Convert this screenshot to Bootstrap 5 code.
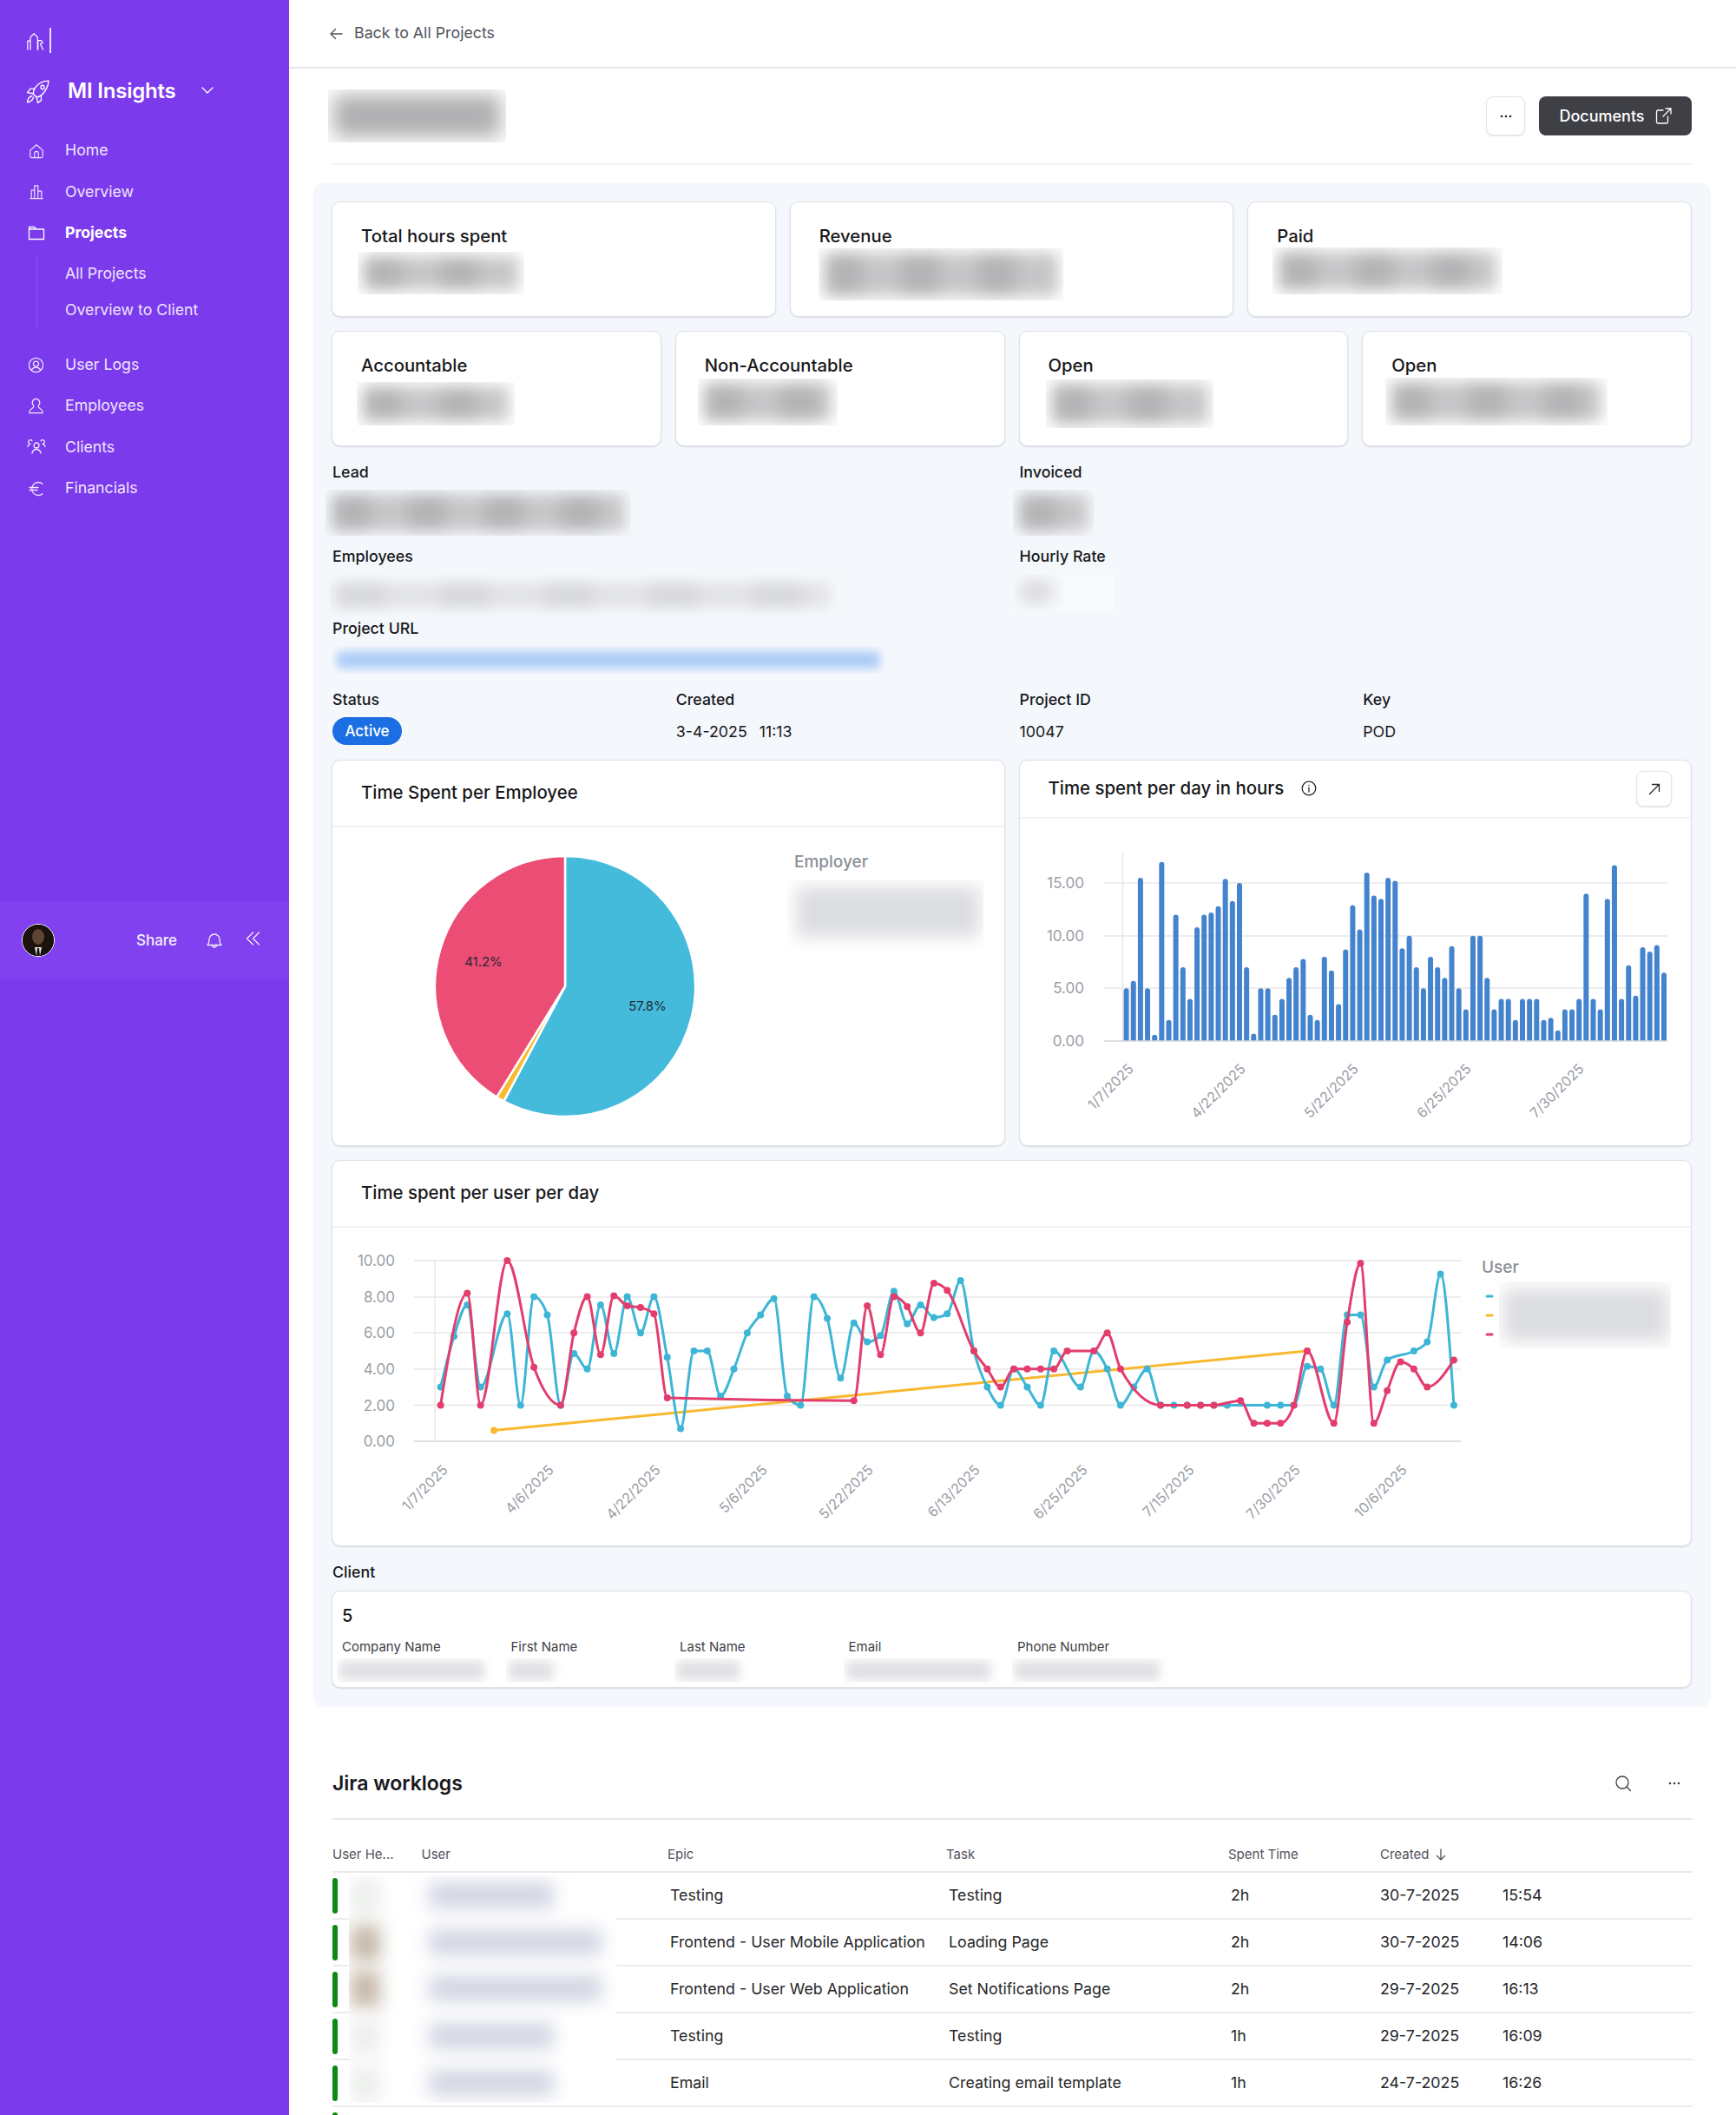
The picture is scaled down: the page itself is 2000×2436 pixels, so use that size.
<!doctype html>
<html lang="en">
<head>
<meta charset="utf-8">
<title>MI Insights</title>
<link href="https://cdn.jsdelivr.net/npm/bootstrap@5.3.0/dist/css/bootstrap.min.css" rel="stylesheet">
<style>
html,body{height:2436px;overflow:hidden}
body{font-family:Inter,"Liberation Sans",sans-serif;color:#18181b;background:#fff;font-size:17.8px}
svg{display:block}
.ic{fill:none;stroke:currentColor;stroke-width:1.3;stroke-linecap:round;stroke-linejoin:round}
.appframe{height:2436px}
.side{width:333px;flex:none;background:#7c3aed;color:#efe6fe;height:2436px}
.logo-row{padding:32px 0 0 30px;height:78px;color:#fff;gap:5px}
.logo-bar{width:1.5px;height:29px;background:#e9defd}
.logo-mark{margin-top:4px}
.brand{padding-left:30px;height:54px;color:#fff}
.brand-name{font-size:24px;font-weight:600;margin-left:21px;letter-spacing:-.2px}
.brand-chev{margin-left:29px;margin-top:-2px}
.menu{margin-top:18px}
.menu-link{height:47.4px;padding:0 0 0 30px;color:#efe6fe;gap:22px;font-size:17.7px}
.menu-link:hover{color:#fff}
.menu-link.on{color:#fff;font-weight:700}
.menu-ico{width:23px;display:flex;justify-content:center}
.submenu{margin:2.500px 0 19px 42px;border-left:1.5px solid #8c52f0;padding-left:32px;height:83px}
.sub-link{height:41.5px;color:#efe6fe;font-size:17.7px;padding:0}
.side-foot{margin-top:auto;margin-bottom:1308px;height:90px;background:#8141ee;color:#f4edff;padding-left:25px}
.face{width:38px;height:38px;border-radius:50%;border:1.5px solid #fff;overflow:hidden;background:#221710}
.share{margin-left:94px;margin-top:2px;font-size:17px;font-weight:500}
.bell{margin-left:34px}
.dbl{margin-left:27px;margin-top:-5px}
.mainpane{width:1667px;flex:none}
.topline{height:79px;border-bottom:2px solid #e6e6e9;padding-left:47px;color:#52525b;gap:13px}
.topline a{color:#52525b;text-decoration:none;font-size:17.8px}
.titlerow{height:109px;margin:0 51px 0 45px}
.more-btn{width:45px;height:45px;border:1px solid #e4e4e7;border-radius:8px;background:#fff;box-shadow:0 1px 2px rgba(0,0,0,.1);color:#27272a;padding:0}
.doc-btn{width:176px;height:45px;border-radius:8px;background:#3f3f46;color:#fff;border:0;font-size:18px;font-weight:500;gap:12px;padding:0}
.doc-btn:hover{background:#3f3f46;color:#fff}
.hline{height:2px;background:#f3f3f5;margin:0 51px 21px 50px}
.panel{margin:0 29px 0 28px;padding:21px 22px 22px 21px;background:#f4f7fc;border-radius:12px;height:1755px}
.tile{border:1px solid #e0e1e6;border-radius:10px;background:#fff;box-shadow:0 1px 2px rgba(0,0,0,.12)}
.stat{height:133px;padding:27px 33px 0}
.stat-label{font-size:20.3px;font-weight:500;line-height:24px}
.smudge{overflow:hidden;position:relative;background:rgba(255,255,255,.35)}
.smudge i{position:absolute;inset:5px 7px;background:repeating-linear-gradient(90deg,#b4b4b6 0 44px,#c6c6c8 44px 88px);filter:blur(9px)}
.ttl-s{width:205px;height:61px}
.ttl-s i{inset:6px;background:#b0b0b2;filter:blur(11px)}
.sm1{width:192px;height:49px;margin:6px 0 0 -4px}
.sm2{width:282px;height:60px;margin:2px 0 0 -1px}
.sm3{width:265px;height:54px;margin:1px 0 0 -5px}
.sm4{width:182px;height:50px;margin:7px 0 0 -5px}
.sm5{width:161px;height:54px;margin:3px 0 0 -8px}
.sm6{width:193px;height:56px;margin:4px 0 0 -3px}
.sm7{width:256px;height:55px;margin:2px 0 0 -7px}
.fields{margin-top:18px}
.nudge{padding-left:1px}
.fld-label{font-size:17.8px;font-weight:500;line-height:24px}
.fld-val{font-size:17.8px;line-height:34px;height:34px;margin-top:8px}
.sm-lead{width:352px;height:53px;margin:8px 0 0 -8px}
.sm-inv{width:94px;height:53px;margin:8px 0 0 -8px}
.sm-emp{width:585px;height:47px;margin:9px 0 0 -4px}
.sm-emp i{inset:8px 6px;background:repeating-linear-gradient(90deg,#d6d7da 0 60px,#e2e3e6 60px 120px)}
.sm-rate{width:116px;height:43px;margin:9px 0 0 -8px}
.sm-rate i{inset:6px 70px 10px 8px;background:#dadbde}
.sm-url{width:638px;height:32px;margin:8px 0 0 -1px}
.sm-url i{inset:6px;background:#aacbf6;filter:blur(6px)}
.gap3{margin-top:3px}
.gap12{margin-top:12px}
.gap18{margin-top:18px}
.state-pill{background:#1b6fe2;color:#fff;border-radius:16px;height:32px;width:80px;font-size:17px;font-weight:500;display:flex;align-items:center;justify-content:center}
.gap-time{margin-left:14px}
.charts{margin-top:-1px}
.chart-tile{height:445px;overflow:hidden}
.chart-head{height:77px;padding:0 33px;border-bottom:2px solid #f3f3f5;font-size:20.4px;font-weight:500}
.chart-head.short{height:67px}
.info-ic{margin-left:20px;color:#27272a}
.expand-btn{width:41px;height:41px;margin-right:-11px;border:1px solid #e4e4e7;border-radius:8px;background:#fff;box-shadow:0 1px 2px rgba(0,0,0,.1);color:#27272a;padding:0}
.chart-canvas{position:relative}
.axt{font-family:Inter,sans-serif;font-size:16px;fill:#9a9ea6}
.axy{font-family:Inter,sans-serif;font-size:17px;fill:#9a9ea6}
.leg{font-family:Inter,sans-serif;font-size:19px;fill:#8b8f97;font-weight:500}
.pielab{font-family:Inter,sans-serif;font-size:15px;fill:#1f2937}
.sm-over{position:absolute;overflow:hidden}
.sm-over i{position:absolute;filter:blur(10px);background:#dcdde0}
.leg-a{left:524px;top:60px;width:226px;height:84px}
.leg-a i{inset:8px 4px 18px 10px}
.leg-b{left:1344px;top:62px;width:198px;height:77px}
.leg-b i{inset:8px 3px 8px 5px}
.row-line{margin-top:16px}
.client-label{margin-top:18px;padding-left:1px}
.client-tile{height:112px;margin-top:9px;padding:16px 11px 0}
.client-num{font-size:20px;font-weight:500;line-height:24px}
.client-cols{display:grid;grid-template-columns:repeat(5,194.5px);margin-top:14px;font-size:15px;color:#3f3f46;line-height:20px}
.client-blur{display:grid;grid-template-columns:repeat(5,194.5px);margin:3px 0 0 -6px}
.cb{height:28px;overflow:hidden;position:relative}
.cb i{position:absolute;inset:3px 25px 3px 3px;filter:blur(6px);background:#dfe0e3}
.cb.tiny i{right:140px}
.cb.shortb i{right:120px}
.jira{margin:0 50px;position:relative}
.jira-head{height:130px;padding-top:74px;border-bottom:2px solid #e9e9ec}
.jira-title{font-size:23px;font-weight:600;line-height:28px;margin:0}
.jira-tools{gap:42px;color:#3f3f46;margin-right:14px;height:28px}
.table.wtable{table-layout:fixed;margin:0;width:1567px;--bs-table-bg:transparent}
.table.wtable th{height:60px;padding:0 0 8px;font-size:15px;font-weight:400;color:#52525b;border-bottom:2px solid #e9e9ec;vertical-align:bottom}
.table.wtable td{height:54px;padding:0 0 0 3px;font-size:17.8px;color:#27272a;border-bottom:2px solid #ececf0;vertical-align:middle}
.table.wtable td.flush{padding-left:0}
.c1{width:102.5px}.c2{width:283.5px}.c3{width:321px}.c4{width:325px}.c5{width:175px}.c6{width:141px}
.okpill{width:6px;height:41px;border-radius:3px;background:#0c8a14}
.hide-over{position:absolute;left:19px;top:194px;width:308px;height:262px;background:#fff;overflow:hidden}
.hide-over b{position:absolute;display:block;filter:blur(10px)}
.av{left:2px;width:34px;height:42px;background:#ecefec}
.av.tan{background:#c5b8a8}
.nm{left:92px;height:30px;width:144px;background:#d2d6e3}
.nm.wide{width:199px}
.r1{top:3px}.r2{top:57px}.r3{top:110px}.r4{top:165px}.r5{top:219px}
.n1{top:8px}.n2{top:62px}.n3{top:115px}.n4{top:170px}.n5{top:224px}
</style>
</head>
<body>
<div class="d-flex appframe">
  <aside class="side d-flex flex-column">
    <div class="logo-row d-flex align-items-start">
      <svg class="ic logo-mark" width="22" height="23" viewBox="0 0 23 25" stroke-width="1.9"><path d="M1.500 23V12H5M5 23V7.500L9.500 3 14 7.500V23M14 11.500h4.500l2 2.500-3 2 3.500 7M14.500 11.500V23" stroke="#fff"/></svg>
      <span class="logo-bar"></span>
    </div>
    <div class="brand d-flex align-items-center">
      <svg class="ic" width="27" height="27" viewBox="0 0 27 24" preserveAspectRatio="none" stroke-width="1.7"><path d="M26 1C19 1 14 3.500 10.500 8 8 11.500 8 13.500 9 15l2.500 2.200c2 1 4 .3 7-2.200C23 11 25.500 7 26 1zM10 9H5l-3.500 4 6.500 1M17.500 16.500V21l-4 2.500-1.500-6M7 16.500C4 17 2 19.500 1.500 23 5 22.500 7.500 21 8.500 18"/><circle cx="19" cy="7.500" r="2"/></svg>
      <span class="brand-name">MI Insights</span>
      <svg class="ic brand-chev" width="14" height="8" viewBox="0 0 14 8"><path d="m1 1 6 6 6-6"/></svg>
    </div>
    <nav class="nav flex-column menu">
      <a class="nav-link menu-link d-flex align-items-center" href="#"><span class="menu-ico"><svg class="ic" width="18" height="18" viewBox="0 0 20 20"><path d="M2 9 10 2l8 7v7.500a2 2 0 0 1-2 2H4a2 2 0 0 1-2-2zM7.500 18.500V13a2.500 2.500 0 0 1 5 0v5.500"/></svg></span>Home</a>
      <a class="nav-link menu-link d-flex align-items-center" href="#"><span class="menu-ico"><svg class="ic" width="18" height="18" viewBox="0 0 20 20"><path d="M2 18.500h16M3.500 18.500V8h4v10.500M7.500 18.500V2h4.500v16.500M12 9h4.500v9.500"/></svg></span>Overview</a>
      <a class="nav-link menu-link on d-flex align-items-center" href="#"><span class="menu-ico"><svg class="ic" width="20" height="17" viewBox="0 0 20 17"><path d="M1.500 1.500h6l2 2.500h9V15.500h-17zM1.500 4h8"/></svg></span>Projects</a>
      <div class="submenu d-flex flex-column">
        <a class="nav-link sub-link d-flex align-items-center" href="#">All Projects</a>
        <a class="nav-link sub-link d-flex align-items-center" href="#">Overview to Client</a>
      </div>
      <a class="nav-link menu-link d-flex align-items-center" href="#"><span class="menu-ico"><svg class="ic" width="19" height="19" viewBox="0 0 20 20"><circle cx="10" cy="10" r="8.500"/><circle cx="10" cy="8.500" r="3.200"/><path d="M4.500 16c1.200-2.300 3-3.300 5.500-3.300s4.300 1 5.500 3.300"/></svg></span>User Logs</a>
      <a class="nav-link menu-link d-flex align-items-center" href="#"><span class="menu-ico"><svg class="ic" width="19" height="19" viewBox="0 0 20 20"><path d="M10 1.500a4.500 4.500 0 0 0-3 7.800V11c0 2-5 2.500-5 6.500v1h16v-1c0-4-5-4.500-5-6.500V9.300a4.500 4.500 0 0 0-3-7.800z"/></svg></span>Employees</a>
      <a class="nav-link menu-link d-flex align-items-center" href="#"><span class="menu-ico"><svg class="ic" width="22" height="18" viewBox="0 0 22 18"><circle cx="11" cy="7" r="3"/><path d="M6 16c.5-3 2.500-4.500 5-4.500s4.500 1.500 5 4.500M1 8.500c.3-2 1.500-3 3-3.200a2.300 2.300 0 1 1 2-3.500M21 8.500c-.3-2-1.500-3-3-3.200a2.300 2.300 0 1 0-2-3.500"/></svg></span>Clients</a>
      <a class="nav-link menu-link d-flex align-items-center" href="#"><span class="menu-ico"><svg class="ic" width="18" height="18" viewBox="0 0 18 18"><path d="M16 3.300a7.500 7.500 0 1 0 0 11.400M1 7.500h10M1 10.500h9"/></svg></span>Financials</a>
    </nav>
    <div class="side-foot d-flex align-items-center">
      <div class="face"><svg width="36" height="36" viewBox="0 0 36 36"><rect width="36" height="36" fill="#1c130d"/><ellipse cx="18" cy="14" rx="7" ry="9" fill="#5f4533"/><path d="M4 36c1-8 7-10 14-10s13 2 14 10z" fill="#15110e"/><path d="M14 26h8l-2 10h-4z" fill="#e8e4df"/><path d="M17 27h2l1 9h-4z" fill="#15110e"/></svg></div>
      <span class="share">Share</span>
      <svg class="ic bell" width="18" height="20" viewBox="0 0 18 20" stroke="#f4edff"><path d="M1 15.500c1.500-1.500 2-3 2-6.500a6 6 0 0 1 12 0c0 3.500.5 5 2 6.500zM6.500 15.500a2.500 2.500 0 0 0 5 0"/></svg>
      <svg class="ic dbl" width="17" height="16" viewBox="0 0 17 16"><path d="M8.500 1 1.500 8l7 7M15.500 1l-7 7 7 7"/></svg>
    </div>
  </aside>

  <main class="mainpane">
    <div class="topline d-flex align-items-center">
      <svg class="ic" width="15" height="14" viewBox="0 0 15 14"><path d="M14 7H1M6.500 1.500 1 7l5.500 5.500"/></svg>
      <a href="#">Back to All Projects</a>
    </div>
    <div class="titlerow d-flex align-items-center justify-content-between">
      <div class="smudge ttl-s" aria-hidden="true"><i></i></div>
      <div class="d-flex gap-3 align-items-center">
        <button class="btn more-btn d-flex align-items-center justify-content-center" type="button" aria-label="More"><svg width="14" height="4" viewBox="0 0 14 4" fill="currentColor"><circle cx="2" cy="2" r="1.300"/><circle cx="7" cy="2" r="1.300"/><circle cx="12" cy="2" r="1.300"/></svg></button>
        <button class="btn doc-btn d-flex align-items-center justify-content-center" type="button">Documents<svg class="ic" width="19" height="19" viewBox="0 0 19 19"><path d="M9 3H3a1.500 1.500 0 0 0-1.500 1.500v12A1.500 1.500 0 0 0 3 18h10a1.500 1.500 0 0 0 1.500-1.500V10M9 10l9-9M12 1h6v6"/></svg></button>
      </div>
    </div>
    <div class="hline"></div>

    <section class="panel">
      <div class="row g-3">
        <div class="col-4"><div class="tile stat"><div class="stat-label">Total hours spent</div><div class="smudge sm1"><i></i></div></div></div>
        <div class="col-4"><div class="tile stat"><div class="stat-label">Revenue</div><div class="smudge sm2"><i></i></div></div></div>
        <div class="col-4"><div class="tile stat"><div class="stat-label">Paid</div><div class="smudge sm3"><i></i></div></div></div>
        <div class="col-3"><div class="tile stat"><div class="stat-label">Accountable</div><div class="smudge sm4"><i></i></div></div></div>
        <div class="col-3"><div class="tile stat"><div class="stat-label">Non-Accountable</div><div class="smudge sm5"><i></i></div></div></div>
        <div class="col-3"><div class="tile stat"><div class="stat-label">Open</div><div class="smudge sm6"><i></i></div></div></div>
        <div class="col-3"><div class="tile stat"><div class="stat-label">Open</div><div class="smudge sm7"><i></i></div></div></div>
      </div>

      <div class="row gx-3 fields">
        <div class="col-6"><div class="nudge"><div class="fld-label">Lead</div><div class="smudge sm-lead"><i></i></div></div></div>
        <div class="col-6"><div class="nudge"><div class="fld-label">Invoiced</div><div class="smudge sm-inv"><i></i></div></div></div>
      </div>
      <div class="row gx-3 gap12">
        <div class="col-6"><div class="nudge"><div class="fld-label">Employees</div><div class="smudge sm-emp"><i></i></div></div></div>
        <div class="col-6"><div class="nudge"><div class="fld-label">Hourly Rate</div><div class="smudge sm-rate"><i></i></div></div></div>
      </div>
      <div class="gap3 nudge"><div class="fld-label">Project URL</div><div class="smudge sm-url"><i></i></div></div>
      <div class="row gx-3 gap18">
        <div class="col-3"><div class="nudge"><div class="fld-label">Status</div><div class="fld-val"><span class="state-pill">Active</span></div></div></div>
        <div class="col-3"><div class="nudge"><div class="fld-label">Created</div><div class="fld-val">3-4-2025<span class="gap-time">11:13</span></div></div></div>
        <div class="col-3"><div class="nudge"><div class="fld-label">Project ID</div><div class="fld-val">10047</div></div></div>
        <div class="col-3"><div class="nudge"><div class="fld-label">Key</div><div class="fld-val">POD</div></div></div>
      </div>

      <div class="row g-3 charts">
        <div class="col-6">
          <div class="tile chart-tile">
            <div class="chart-head d-flex align-items-center">Time Spent per Employee</div>
            <div class="chart-canvas">
              <svg width="776" height="366" viewBox="383 953 776 366">
                <path d="M651 1136V986A150 150 0 1 1 580.400 1268.300Z" fill="#45bbdc" stroke="#fff" stroke-width="2.500"/>
                <path d="M651 1136 580.400 1268.300A150 150 0 0 1 572.200 1263.600Z" fill="#fbb92f" stroke="#fff" stroke-width="2.500"/>
                <path d="M651 1136 572.200 1263.600A150 150 0 0 1 651 986Z" fill="#ec4d75" stroke="#fff" stroke-width="2.500"/>
                <text class="pielab" x="557" y="1113" text-anchor="middle">41.2%</text>
                <text class="pielab" x="746" y="1164" text-anchor="middle">57.8%</text>
                <text class="leg" x="915" y="999">Employer</text>
              </svg>
              <div class="sm-over leg-a"><i></i></div>
            </div>
          </div>
        </div>
        <div class="col-6">
          <div class="tile chart-tile">
            <div class="chart-head short d-flex align-items-center justify-content-between">
              <span class="d-flex align-items-center">Time spent per day in hours<svg class="ic info-ic" width="18" height="18" viewBox="0 0 18 18"><circle cx="9" cy="9" r="7.800"/><path d="M9 8v5M9 5.300v.1"/></svg></span>
              <button class="btn expand-btn d-flex align-items-center justify-content-center" type="button" aria-label="Expand"><svg class="ic" width="14" height="14" viewBox="0 0 14 14"><path d="M1.500 12.500 12.500 1.500M4.500 1.500h8v8"/></svg></button>
            </div>
            <svg id="barChart" width="776" height="376" viewBox="1175 943 776 376">
              <g stroke="#e8e8ea" stroke-width="1.500"><path d="M1272 1017H1921M1272 1078H1921M1272 1138H1921"/></g>
              <path d="M1293.500 982V1199" stroke="#e8e8ea" stroke-width="1.500"/>
              <g id="bars" fill="#4483cd"></g>
              <path d="M1272 1199H1921" stroke="#d4d4d8" stroke-width="1.500"/>
              <g text-anchor="end">
                <text class="axy" x="1249" y="1023">15.00</text><text class="axy" x="1249" y="1084">10.00</text><text class="axy" x="1249" y="1144">5.00</text><text class="axy" x="1249" y="1205">0.00</text>
                <text class="axt" transform="rotate(-45 1307 1232)" x="1307" y="1232">1/7/2025</text>
                <text class="axt" transform="rotate(-45 1436 1232)" x="1436" y="1232">4/22/2025</text>
                <text class="axt" transform="rotate(-45 1566 1232)" x="1566" y="1232">5/22/2025</text>
                <text class="axt" transform="rotate(-45 1696 1232)" x="1696" y="1232">6/25/2025</text>
                <text class="axt" transform="rotate(-45 1826 1232)" x="1826" y="1232">7/30/2025</text>
              </g>
            </svg>
          </div>
        </div>
      </div>

      <div class="row-line">
        <div class="tile chart-tile">
          <div class="chart-head d-flex align-items-center">Time spent per user per day</div>
          <div class="chart-canvas">
            <svg id="lineChart" width="1567" height="366" viewBox="383 1414 1567 366">
              <g stroke="#e8e8ea" stroke-width="1.500"><path d="M477 1452H1683M477 1494H1683M477 1535H1683M477 1577H1683M477 1618.500H1683M501 1452V1660"/></g>
              <path d="M477 1660H1683" stroke="#d4d4d8" stroke-width="1.500"/>
              <g id="lines"></g>
              <g text-anchor="end">
                <text class="axy" x="455" y="1458">10.00</text><text class="axy" x="455" y="1500">8.00</text><text class="axy" x="455" y="1541">6.00</text><text class="axy" x="455" y="1583">4.00</text><text class="axy" x="455" y="1624.500">2.00</text><text class="axy" x="455" y="1666">0.00</text>
                <text class="axt" transform="rotate(-45 517 1694)" x="517" y="1694">1/7/2025</text>
                <text class="axt" transform="rotate(-45 639 1694)" x="639" y="1694">4/6/2025</text>
                <text class="axt" transform="rotate(-45 762 1694)" x="762" y="1694">4/22/2025</text>
                <text class="axt" transform="rotate(-45 885 1694)" x="885" y="1694">5/6/2025</text>
                <text class="axt" transform="rotate(-45 1007 1694)" x="1007" y="1694">5/22/2025</text>
                <text class="axt" transform="rotate(-45 1130 1694)" x="1130" y="1694">6/13/2025</text>
                <text class="axt" transform="rotate(-45 1254 1694)" x="1254" y="1694">6/25/2025</text>
                <text class="axt" transform="rotate(-45 1377 1694)" x="1377" y="1694">7/15/2025</text>
                <text class="axt" transform="rotate(-45 1499 1694)" x="1499" y="1694">7/30/2025</text>
                <text class="axt" transform="rotate(-45 1622 1694)" x="1622" y="1694">10/6/2025</text>
              </g>
              <text class="leg" x="1707" y="1466">User</text>
              <g stroke-width="3" stroke-linecap="round"><path d="M1713 1493h6" stroke="#3db6d6"/><path d="M1713 1515h6" stroke="#f9b92f"/><path d="M1713 1537h6" stroke="#e33d6e"/></g>
            </svg>
            <div class="sm-over leg-b"><i></i></div>
          </div>
        </div>
      </div>

      <div class="fld-label client-label">Client</div>
      <div class="tile client-tile">
        <div class="client-num">5</div>
        <div class="client-cols"><span>Company Name</span><span>First Name</span><span>Last Name</span><span>Email</span><span>Phone Number</span></div>
        <div class="client-blur"><div class="cb"><i></i></div><div class="cb tiny"><i></i></div><div class="cb shortb"><i></i></div><div class="cb"><i></i></div><div class="cb"><i></i></div></div>
      </div>
    </section>

    <section class="jira">
      <div class="jira-head d-flex justify-content-between align-items-start">
        <h2 class="jira-title">Jira worklogs</h2>
        <div class="jira-tools d-flex align-items-center">
          <svg class="ic" width="20" height="20" viewBox="0 0 20 20"><circle cx="9" cy="9" r="7"/><path d="m14 14 4.500 4.500"/></svg>
          <svg width="14" height="4" viewBox="0 0 14 4" fill="currentColor"><circle cx="2" cy="2" r="1.300"/><circle cx="7" cy="2" r="1.300"/><circle cx="12" cy="2" r="1.300"/></svg>
        </div>
      </div>
      <table class="table wtable">
        <thead><tr>
          <th class="c1">User He...</th><th class="c2">User</th><th class="c3">Epic</th><th class="c4">Task</th><th class="c5">Spent Time</th>
          <th class="c6"><span class="d-inline-flex align-items-center gap-2">Created<svg class="ic" width="12" height="14" viewBox="0 0 12 14"><path d="M6 1v12M1.500 8.500 6 13l4.500-4.500"/></svg></span></th><th></th>
        </tr></thead>
        <tbody>
          <tr><td class="flush"><div class="okpill"></div></td><td></td><td>Testing</td><td>Testing</td><td>2h</td><td class="flush">30-7-2025</td><td class="flush">15:54</td></tr>
          <tr><td class="flush"><div class="okpill"></div></td><td></td><td>Frontend - User Mobile Application</td><td>Loading Page</td><td>2h</td><td class="flush">30-7-2025</td><td class="flush">14:06</td></tr>
          <tr><td class="flush"><div class="okpill"></div></td><td></td><td>Frontend - User Web Application</td><td>Set Notifications Page</td><td>2h</td><td class="flush">29-7-2025</td><td class="flush">16:13</td></tr>
          <tr><td class="flush"><div class="okpill"></div></td><td></td><td>Testing</td><td>Testing</td><td>1h</td><td class="flush">29-7-2025</td><td class="flush">16:09</td></tr>
          <tr><td class="flush"><div class="okpill"></div></td><td></td><td>Email</td><td>Creating email template</td><td>1h</td><td class="flush">24-7-2025</td><td class="flush">16:26</td></tr>
          <tr><td class="flush"><div class="okpill"></div></td><td></td><td></td><td></td><td></td><td></td><td></td></tr>
        </tbody>
      </table>
      <div class="hide-over" aria-hidden="true">
        <b class="av r1"></b><b class="nm n1"></b>
        <b class="av tan r2"></b><b class="nm wide n2"></b>
        <b class="av tan r3"></b><b class="nm wide n3"></b>
        <b class="av r4"></b><b class="nm n4"></b>
        <b class="av r5"></b><b class="nm n5"></b>
      </div>
    </section>
  </main>
</div>
<script>
(function(){
  var NS='http://www.w3.org/2000/svg';
  var bars=[5,5.7,15.5,5,.6,17,2,12,7,4,10.8,12,12.2,12.8,15.4,13.3,15,7,.7,5,5,2.5,4,6,7,7.8,2.5,2,8,6.7,3.5,8.7,12.9,10.6,16,13.8,13.5,15.5,15.2,8.8,10,7,5,8,7,6,9,5,3,10,10,6,3,4,4,2,4,4,4,2,2.2,1,3,3,4,14,4,3,13.5,16.7,4,7.2,4.3,8.9,8.5,9.1,6.5];
  var g=document.getElementById('bars');
  bars.forEach(function(v,i){
    var x=1297.6+i*8.15-3,y=1199-v*12.13,r=3;
    var p=document.createElementNS(NS,'path');
    p.setAttribute('d','M'+x+' 1199V'+(y+r)+'a3 3 0 0 1 6 0V1199Z');
    g.appendChild(p);
  });
  function X(i){return 507.6+i*15.36}
  function Y(v){return 1660-v*20.8}
  function mono(pts){
    function sg(a){return a<0?-1:1}
    var n=pts.length,t=[],d='M'+pts[0][0]+' '+pts[0][1];
    for(var i=1;i<n-1;i++){
      var h0=pts[i][0]-pts[i-1][0],h1=pts[i+1][0]-pts[i][0],s0=(pts[i][1]-pts[i-1][1])/h0,s1=(pts[i+1][1]-pts[i][1])/h1,q=(s0*h1+s1*h0)/(h0+h1);
      t[i]=(sg(s0)+sg(s1))*Math.min(Math.abs(s0),Math.abs(s1),.5*Math.abs(q))||0;
    }
    if(n>2){
      t[0]=(3*(pts[1][1]-pts[0][1])/(pts[1][0]-pts[0][0])-t[1])/2;
      t[n-1]=(3*(pts[n-1][1]-pts[n-2][1])/(pts[n-1][0]-pts[n-2][0])-t[n-2])/2;
    }else{t[0]=t[1]=(pts[1][1]-pts[0][1])/(pts[1][0]-pts[0][0])}
    for(i=1;i<n;i++){
      var dx=(pts[i][0]-pts[i-1][0])/3;
      d+='C'+(pts[i-1][0]+dx)+' '+(pts[i-1][1]+dx*t[i-1])+' '+(pts[i][0]-dx)+' '+(pts[i][1]-dx*t[i])+' '+pts[i][0]+' '+pts[i][1];
    }
    return d;
  }
  var blue={0:3,1:5.8,2:7.55,3:3,5:7.05,6:2,7:8,8:7,9:2,10:4.85,11:4,12:7.55,13:4.85,14:8,15:6,16:8,17:4.65,18:.7,19:5,20:5,21:2.5,22:4,23:6,24:7,25:7.9,26:2.5,27:2,28:8,29:6.8,30:3.5,31:6.55,32:5.5,33:5.85,34:8.3,35:6.5,36:7.55,37:6.85,38:7.05,39:8.9,40:5,41:3,42:2,43:4,44:3,45:2,46:5,48:3,49:5,50:4,51:2,52:3,53:4,54:2,55:2,56:2,57:2,58:2,59:2,62:2,63:2,64:2,65:4.15,66:4,67:2,68:7,69:7,70:3,71:4.5,73:5,74:5.5,75:9.25,76:2};
  var red={0:2,2:8.2,3:2,5:10,7:4.1,9:2,10:6,11:8,12:4.8,13:8.05,14:7.5,15:7.4,16:7.05,17:2.4,31:2.25,32:7.5,33:4.8,34:8,35:7.45,36:6,37:8.75,38:8.35,40:5,41:4,42:3,43:4,44:4,45:4,46:4,47:5,49:5,50:6,51:4,54:2,56:2,57:2,58:2,60:2.25,61:1,62:1,63:1,64:2,65:5,67:1,68:6.6,69:9.85,70:1,71:2.8,72:4.4,73:4,74:3,76:4.5};
  var orange={4:.6,65:5};
  var host=document.getElementById('lines');
  [[orange,'#f9b92f'],[blue,'#3db6d6'],[red,'#e33d6e']].forEach(function(s){
    var pts=Object.keys(s[0]).map(Number).sort(function(a,b){return a-b}).map(function(i){return [X(i),Y(s[0][i])]});
    var p=document.createElementNS(NS,'path');
    p.setAttribute('d',mono(pts));p.setAttribute('fill','none');p.setAttribute('stroke',s[1]);p.setAttribute('stroke-width','3');
    host.appendChild(p);
    pts.forEach(function(q){
      var c=document.createElementNS(NS,'circle');
      c.setAttribute('cx',q[0]);c.setAttribute('cy',q[1]);c.setAttribute('r',4);c.setAttribute('fill',s[1]);
      host.appendChild(c);
    });
  });
})();
</script>
<script src="https://cdn.jsdelivr.net/npm/bootstrap@5.3.0/dist/js/bootstrap.bundle.min.js"></script>
</body>
</html>
